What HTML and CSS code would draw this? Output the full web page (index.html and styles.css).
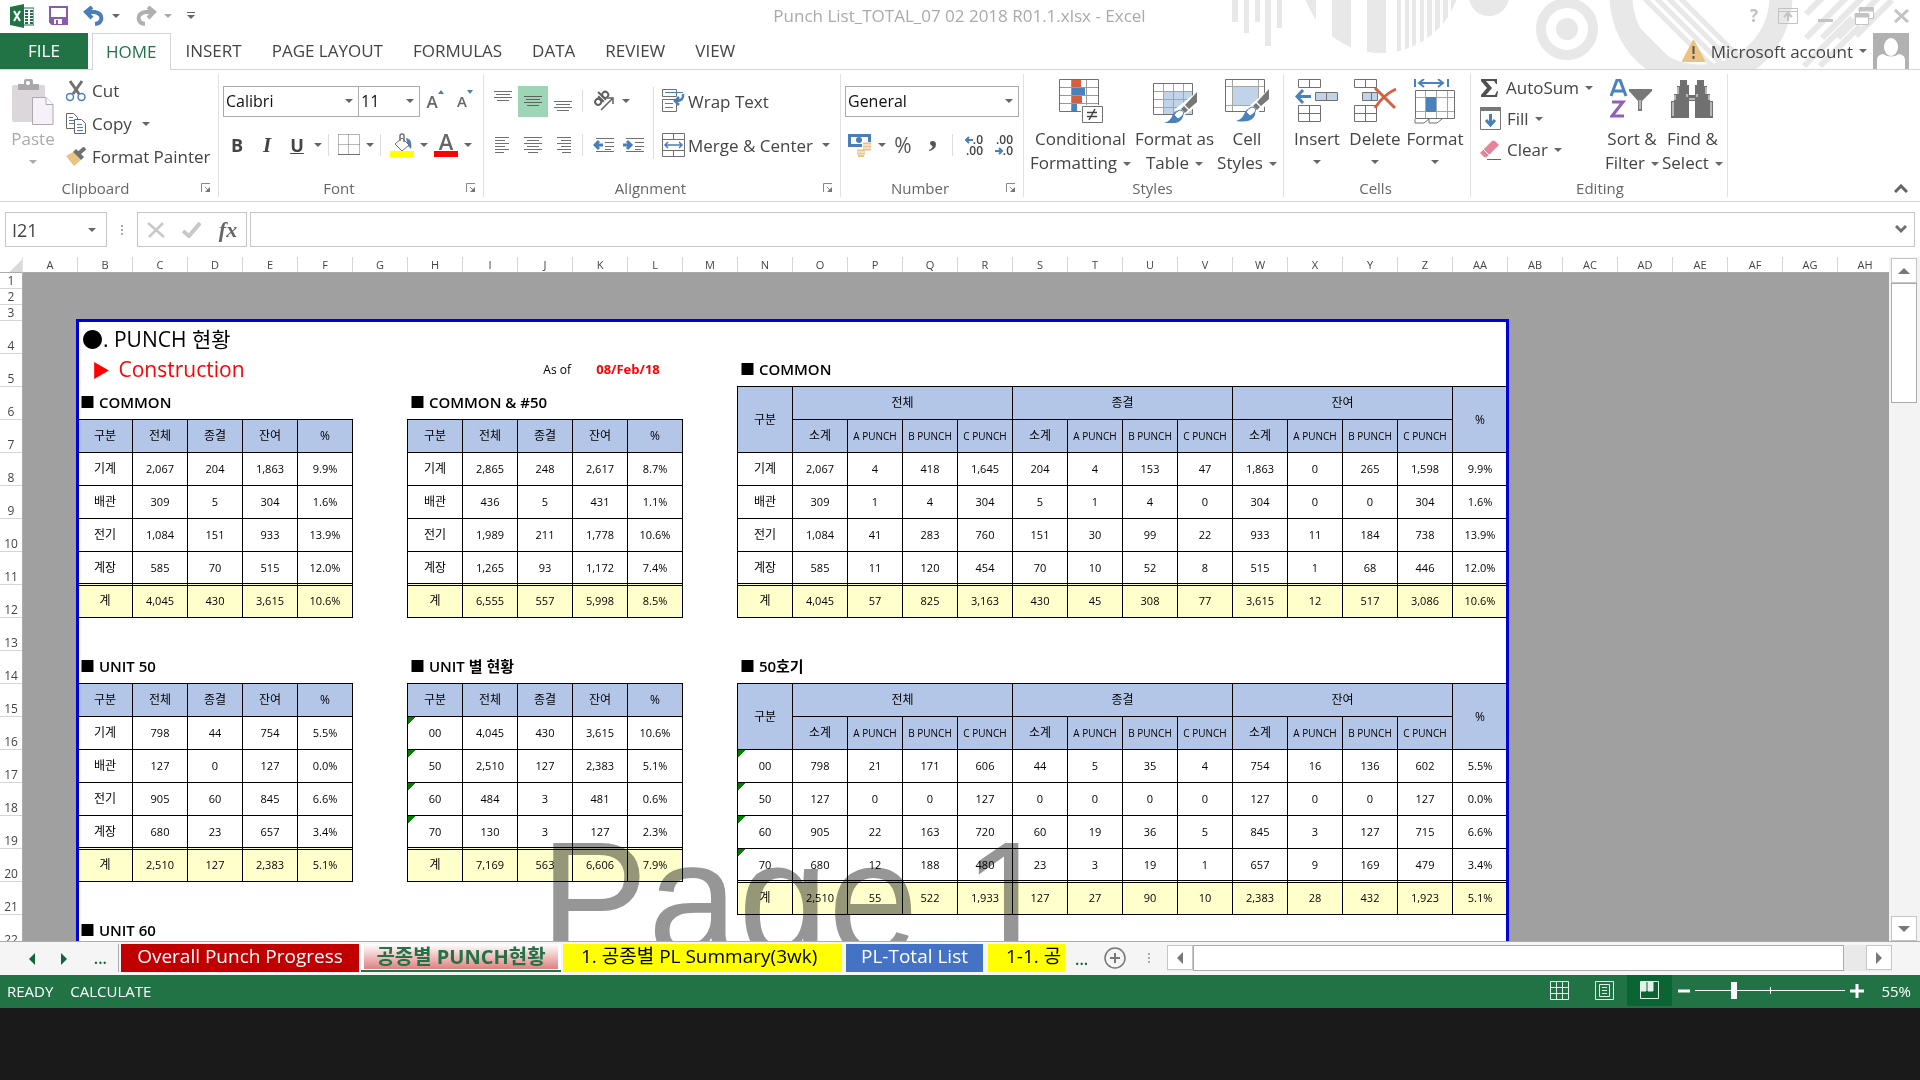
FILE: index.html
```html
<!DOCTYPE html>
<html lang="ko">
<head>
    <meta charset="UTF-8">
    <meta name="viewport" content="width=device-width, initial-scale=1.0">
    <title>Punch List_TOTAL_07 02 2018 R01.1.xlsx - Excel</title>
    <link rel="stylesheet" href="styles.css">
</head>
<body>
<div class="app">
    <header class="top">
        <svg class="decor" width="720" height="69" viewBox="0 0 720 69" fill="#e8e8e8" aria-hidden="true">
            <clipPath id="disc"><circle cx="181" cy="-27" r="80"/></clipPath>
            <clipPath id="ring"><circle cx="501" cy="-4" r="70"/></clipPath>
            <path d="M32 0h6v22h-6zM44 0h5v33h-5zM55 0h5v22h-5zM65 0h6v46h-6zM77 0h5v28h-5z"/>
            <path clip-path="url(#disc)" d="M96 0h20v60h-20zM132 0h19v60h-19zM167 0h19v60h-19zM197 0h4v60h-4zM205 0h4v60h-4zM212 0h4v60h-4zM220 0h4v60h-4zM227 0h5v60h-5zM235 0h5v60h-5zM243 0h5v60h-5zM251 0h5v60h-5z"/>
            <circle cx="289" cy="-4" r="20"/>
            <circle cx="367" cy="29" r="26" fill="none" stroke="#e8e8e8" stroke-width="10"/>
            <circle cx="367" cy="29" r="11"/>
            <circle cx="501" cy="-4" r="80" fill="none" stroke="#e8e8e8" stroke-width="23"/>
            <path clip-path="url(#ring)" d="M430 18l50 50h-30l-20-10z"/>
            <path clip-path="url(#ring)" stroke="#e8e8e8" stroke-width="5" d="M430 -16l84 84M442 -16l84 84M454 -16l84 84M466 -16l84 84"/>
            <path stroke="#e8e8e8" stroke-width="6" d="M606 38l45-45M622 38l45-45M638 38l45-45M606 14l20-20M656 36l36-36M604 66l48-48M620 66l40-40"/>
        </svg>
        <div class="titlebar">
            <div class="quick">
                <button aria-label="Excel"><svg width="24" height="24" viewBox="0 0 24 24"><path d="M13 4h11v17H13z" fill="#fff" stroke="#217346"/><path d="M15 7h3M20 7h3M15 10h3M20 10h3M15 13h3M20 13h3M15 16h3M20 16h3M15 19h3M20 19h3" stroke="#217346" stroke-width="2"/><path d="M0 3l14-3v24L0 21z" fill="#217346"/><path d="M4 7l6 10M10 7L4 17" stroke="#fff" stroke-width="2"/></svg></button>
                <button aria-label="Save"><svg width="19" height="19" viewBox="0 0 19 19"><path d="M1 1h17v17H3l-2-2z" fill="#fff" stroke="#8a5ab0" stroke-width="2"/><path d="M1 11h17v7H3l-2-2z" fill="#8a5ab0"/><path d="M5 13h8v5H5z" fill="#fff"/><path d="M7 14h2v4H7z" fill="#8a5ab0"/></svg></button>
                <button aria-label="Undo"><svg width="22" height="20" viewBox="0 0 22 20" fill="none" stroke="#4a7ebb" stroke-width="4"><path d="M2 6h10c9 2 8 11 0 12"/><path d="M9 1L3 6l6 6"/></svg><i class="caret"></i></button>
                <button aria-label="Redo" class="muted"><svg width="22" height="20" viewBox="0 0 22 20" fill="none" stroke="#b0b0b0" stroke-width="4"><path d="M20 6H10c-9 2-8 11 0 12"/><path d="M13 1l6 5-6 6"/></svg><i class="caret"></i></button>
                <button aria-label="Customize Quick Access Toolbar" class="customize"><i class="caret"></i></button>
            </div>
            <h1>Punch List_TOTAL_07 02 2018 R01.1.xlsx - Excel</h1>
            <div class="window-buttons">
                <button aria-label="Help">?</button>
                <button aria-label="Ribbon display options"><svg width="20" height="16" viewBox="0 0 20 16" fill="none" stroke="#c3c3c3"><path d="M.5.5h19v15H.5zM1 3.500h18"/><path d="M10 13V6M6 9l4-4 4 4" stroke-width="2"/></svg></button>
                <button aria-label="Minimize"><svg width="16" height="16" viewBox="0 0 16 16"><path d="M0 11h15v3H0z" fill="#c3c3c3"/></svg></button>
                <button aria-label="Restore"><svg width="20" height="20" viewBox="0 0 20 20" fill="#fff" stroke="#c3c3c3"><path d="M5.500 1.500h14v11h-14z"/><path d="M5 2h15v3H5z" fill="#c3c3c3"/><path d="M1.500 7.500h13v11h-13z"/><path d="M1 8h14v3H1z" fill="#c3c3c3"/></svg></button>
                <button aria-label="Close"><svg width="15" height="14" viewBox="0 0 15 14" stroke="#c3c3c3" stroke-width="3"><path d="M1 1l13 12M14 1L1 13"/></svg></button>
            </div>
        </div>
        <nav class="tabs">
            <a href="#" class="file">FILE</a>
            <a href="#" class="active">HOME</a>
            <a href="#">INSERT</a>
            <a href="#">PAGE LAYOUT</a>
            <a href="#">FORMULAS</a>
            <a href="#">DATA</a>
            <a href="#">REVIEW</a>
            <a href="#">VIEW</a>
            <button class="account">
                <svg width="23" height="22" viewBox="0 0 23 22"><path d="M11.500 1L22 21H1z" fill="#eac282" stroke="#eac282" stroke-width="2" stroke-linejoin="round"/><path d="M11.500 6v8M11.500 16v3" stroke="#555" stroke-width="2"/></svg>
                <span>Microsoft account</span><i class="caret"></i>
                <svg class="avatar" width="36" height="36" viewBox="0 0 36 36"><path fill="#b1b1b1" d="M0 0h36v36H0z"/><ellipse cx="18" cy="14" rx="7" ry="9" fill="#fff"/><path d="M4 36V27q0-5 6-6 8 5 16 0 6 1 6 6v9z" fill="#fff"/></svg>
            </button>
        </nav>
    </header>

    <section class="ribbon">
        <div class="group clipboard">
            <div class="tools">
                <button class="big paste" aria-label="Paste">
                    <svg width="42" height="48" viewBox="0 0 42 48"><rect y="6" width="33" height="37" rx="2" fill="#dbd7db"/><path d="M6 11V5h6V2q0-2 2-2h5q2 0 2 2v3h6v6z" fill="#aaa8aa"/><circle cx="16" cy="4" r="2" fill="#fff"/><path d="M20.500 18.500H34l7 7v20H20.500z" fill="#f6f1f8" stroke="#aaa"/><path d="M34 18.500v7h7" fill="#fff" stroke="#aaa"/></svg>
                    <span>Paste</span><i class="caret"></i>
                </button>
                <div class="stack">
                    <button><svg width="20" height="22" viewBox="0 0 20 22" fill="none"><path d="M4 1l9 13M16 1L7 14" stroke="#707070" stroke-width="3"/><circle cx="4" cy="17" r="3.500" stroke="#4a7ebb" stroke-width="1.500"/><circle cx="15.500" cy="17" r="3.500" stroke="#4a7ebb" stroke-width="1.500"/></svg>Cut</button>
                    <button><svg width="20" height="21" viewBox="0 0 20 21" fill="#fff" stroke="#666"><path d="M.5.5h7l4 4v11H.5z"/><path d="M3 4.500h4M3 7.500h5M3 10.500h5" stroke="#4a7ebb"/><path d="M8.500 6.500h7l4 4v10h-11z"/><path d="M11 11.500h5M11 14.500h6M11 17.500h6" stroke="#4a7ebb"/></svg>Copy<i class="caret"></i></button>
                    <button><svg width="20" height="19" viewBox="0 0 20 19"><path d="M0 9l7-4 8 8-7 6z" fill="#eac282"/><path d="M7 5l3-3 8 8-3 3z" fill="#707070"/><path d="M12 7l7-6" stroke="#707070" stroke-width="4"/></svg>Format Painter</button>
                </div>
            </div>
            <div class="caption"><span>Clipboard</span><button class="launcher" aria-label="Clipboard settings"><svg width="10" height="10" viewBox="0 0 10 10"><path d="M.5 9V.5H9M4 4l4 4" stroke="#888" fill="none"/><path d="M9 4v5H4z" fill="#777"/></svg></button></div>
        </div>

        <div class="group font">
            <div class="rows">
                <div class="line">
                    <label class="pick font-name"><select aria-label="Font"><option>Calibri</option></select></label>
                    <label class="pick font-size"><select aria-label="Font size"><option>11</option></select></label>
                    <button class="tool grow" aria-label="Increase font size">A<i class="up"></i></button>
                    <button class="tool shrink" aria-label="Decrease font size">A<i class="down"></i></button>
                </div>
                <div class="line">
                    <button class="tool bold" aria-label="Bold">B</button>
                    <button class="tool italic" aria-label="Italic">I</button>
                    <button class="tool underline" aria-label="Underline">U</button>
                    <button class="drop" aria-label="Underline options"><i class="caret"></i></button>
                    <hr>
                    <button class="tool" aria-label="Borders"><svg width="22" height="22" viewBox="0 0 22 22" fill="none" stroke="#707070"><path d="M.5.5h21v20M.5.5v20M10.500.5v20M.5 10.500h21" stroke-dasharray="1 1"/><path d="M0 20.500h22"/></svg></button>
                    <button class="drop" aria-label="Border options"><i class="caret"></i></button>
                    <hr>
                    <button class="tool wide" aria-label="Fill color"><svg width="24" height="24" viewBox="0 0 24 24" fill="none"><path d="M16 5c5 1 6 5 5 11l-3-3z" fill="#4a7ebb"/><path d="M12 5l7 7-7 6-7-7z" fill="#fff" stroke="#707070"/><path d="M10 8V3q0-2 2-2t2 2v6" stroke="#707070" stroke-width="1.500"/><path d="M0 18h24v6H0z" fill="#ff0"/></svg></button>
                    <button class="drop" aria-label="Fill color options"><i class="caret"></i></button>
                    <button class="tool wide color" aria-label="Font color">A</button>
                    <button class="drop" aria-label="Font color options"><i class="caret"></i></button>
                </div>
            </div>
            <div class="caption"><span>Font</span><button class="launcher" aria-label="Font settings"><svg width="10" height="10" viewBox="0 0 10 10"><path d="M.5 9V.5H9M4 4l4 4" stroke="#888" fill="none"/><path d="M9 4v5H4z" fill="#777"/></svg></button></div>
        </div>

        <div class="group alignment">
            <div class="tools">
                <div class="rows">
                    <div class="line">
                        <button class="tool" aria-label="Top align"><svg width="18" height="22" viewBox="0 0 18 22" stroke="#707070"><path d="M0 1.500h18M2 4.500h14M0 7.500h18M3 10.500h12"/></svg></button>
                        <button class="tool on" aria-label="Middle align"><svg width="18" height="22" viewBox="0 0 18 22" stroke="#606060"><path d="M0 6.500h18M2 9.500h14M0 12.500h18M3 15.500h12"/></svg></button>
                        <button class="tool" aria-label="Bottom align"><svg width="18" height="22" viewBox="0 0 18 22" stroke="#707070"><path d="M0 11.500h18M2 14.500h14M0 17.500h18M3 20.500h12"/></svg></button>
                        <hr>
                        <button class="tool wide" aria-label="Orientation"><svg class="orient" width="22" height="22" viewBox="0 0 22 22" fill="none" stroke="#606060" stroke-width="2"><g transform="rotate(-45 8 9)"><circle cx="4" cy="9" r="3"/><path d="M8 5v8M11 2v11"/><circle cx="14" cy="9" r="3"/></g><path d="M8 20L19 9M14 8h6v6" stroke-width="1.500"/></svg></button>
                        <button class="drop" aria-label="Orientation options"><i class="caret"></i></button>
                    </div>
                    <div class="line">
                        <button class="tool" aria-label="Align left"><svg width="16" height="18" viewBox="0 0 16 18" stroke="#707070"><path d="M0 1.500h14M0 4.500h10M0 7.500h14M0 10.500h10M0 13.500h14M0 16.500h9"/></svg></button>
                        <button class="tool" aria-label="Center"><svg width="18" height="18" viewBox="0 0 18 18" stroke="#707070"><path d="M0 1.500h18M3 4.500h12M0 7.500h18M3 10.500h12M0 13.500h18M4 16.500h10"/></svg></button>
                        <button class="tool" aria-label="Align right"><svg width="16" height="18" viewBox="0 0 16 18" stroke="#707070"><path d="M2 1.500h14M6 4.500h10M2 7.500h14M6 10.500h10M2 13.500h14M7 16.500h9"/></svg></button>
                        <hr>
                        <button class="tool" aria-label="Decrease indent"><svg width="21" height="16" viewBox="0 0 21 16" stroke="#707070"><path d="M3 1.500h18M12 5.500h9M12 9.500h9M3 14.500h18M12 12.500h6"/><path d="M10 8H2M6 4L2 8l4 4" fill="none" stroke="#4a7ebb" stroke-width="3"/></svg></button>
                        <button class="tool" aria-label="Increase indent"><svg width="21" height="16" viewBox="0 0 21 16" stroke="#707070"><path d="M3 1.500h18M12 5.500h9M12 9.500h9M3 14.500h18M12 12.500h6"/><path d="M0 8h8M4 4l4 4-4 4" fill="none" stroke="#4a7ebb" stroke-width="3"/></svg></button>
                    </div>
                </div>
                <div class="rows wrap">
                    <div class="line">
                        <button class="text"><svg width="23" height="24" viewBox="0 0 23 24" fill="none" stroke="#707070"><path d="M.5.5h14v7H.5zM.5 10.500h14v12H.5z"/><path d="M3 3.500h18M3 14.500h8M3 18.500h8" stroke="#4a7ebb"/><path d="M21 5q1 7-7 7M17 8l-4 4 4 4" stroke="#4a7ebb" stroke-width="2.500"/></svg>Wrap Text</button>
                    </div>
                    <div class="line">
                        <button class="text"><svg width="23" height="24" viewBox="0 0 23 24" fill="none" stroke="#707070"><path d="M.5.5h22v23H.5zM0 6.500h23M0 17.500h23M11.500 0v6M11.500 18v6"/><path d="M3 12h17M6 9l-3 3 3 3M17 9l3 3-3 3" stroke="#4a7ebb" stroke-width="1.500"/></svg>Merge &amp; Center<i class="caret"></i></button>
                    </div>
                </div>
            </div>
            <div class="caption"><span>Alignment</span><button class="launcher" aria-label="Alignment settings"><svg width="10" height="10" viewBox="0 0 10 10"><path d="M.5 9V.5H9M4 4l4 4" stroke="#888" fill="none"/><path d="M9 4v5H4z" fill="#777"/></svg></button></div>
        </div>

        <div class="group number">
            <div class="rows">
                <div class="line">
                    <label class="pick number-format"><select aria-label="Number format"><option>General</option></select></label>
                </div>
                <div class="line">
                    <button class="tool wide" aria-label="Accounting format"><svg width="24" height="23" viewBox="0 0 24 23"><path d="M0 0h23v13H0z" fill="#4a7ebb"/><path d="M3 3h17v7H3z" fill="#fff"/><circle cx="11" cy="6" r="3" fill="#4a7ebb"/><path d="M14 8h10v10H14zM8 14h10v9H8z" fill="#fff"/><path d="M15 9.500h8M15 12.500h8M15 15.500h8M9 16.500h8M9 19.500h8M10 22h6" stroke="#eac282" stroke-width="2"/></svg></button>
                    <button class="drop" aria-label="Accounting options"><i class="caret"></i></button>
                    <button class="tool percent" aria-label="Percent style">%</button>
                    <button class="tool comma" aria-label="Comma style">,</button>
                    <hr>
                    <button class="tool decimal" aria-label="Increase decimal"><span><svg width="8" height="8" viewBox="0 0 8 8" fill="none" stroke="#4a7ebb" stroke-width="2"><path d="M8 4H1M4 1L1 4l3 3"/></svg>.0</span><span>.00</span></button>
                    <button class="tool decimal" aria-label="Decrease decimal"><span>.00</span><span><svg width="8" height="8" viewBox="0 0 8 8" fill="none" stroke="#4a7ebb" stroke-width="2"><path d="M0 4h7M4 1l3 3-3 3"/></svg>.0</span></button>
                </div>
            </div>
            <div class="caption"><span>Number</span><button class="launcher" aria-label="Number settings"><svg width="10" height="10" viewBox="0 0 10 10"><path d="M.5 9V.5H9M4 4l4 4" stroke="#888" fill="none"/><path d="M9 4v5H4z" fill="#777"/></svg></button></div>
        </div>

        <div class="group styles">
            <div class="tools">
                <button class="big cond">
                    <svg width="44" height="44" viewBox="0 0 44 44" fill="none"><path d="M13 1h9v8h-9z" fill="#d65f40"/><path d="M13 9h13v8H13z" fill="#4a82bb"/><path d="M13 17h10v8H13z" fill="#d65f40"/><path d="M13 25h5v8h-5z" fill="#4a82bb"/><path d="M.5.500h39v32H.5z" stroke="#707070"/><path d="M12.500 1v31M27.500 1v31M1 8.500h38M1 16.500h38M1 24.500h38" stroke="#999"/><path d="M22 26h22v18H22z" fill="#fff"/><path d="M23.500 27.500h20v16h-20z" fill="#fff" stroke="#707070"/><path d="M28 33.500h10M28 37.500h10M36 30l-6 11" stroke="#444" stroke-width="1.500"/></svg>
                    <span>Conditional<br>Formatting<i class="caret"></i></span>
                </button>
                <button class="big as-table">
                    <svg width="44" height="44" viewBox="0 0 44 44" fill="none"><path d="M11 12h29v23H11z" fill="#c0d3e9"/><path d="M.5 4.500h39v31H.5z" stroke="#707070"/><path d="M10.500 5v30M20.500 5v30M30.500 5v30M1 12.500h38M1 20.500h38M1 28.500h38" stroke="#a5a5a5"/><path d="M45 12v14L29 38l-8-7z" fill="#fff"/><path d="M44 13v10l-8 7-4-4z" fill="#777"/><path d="M31 27l4 4-3 3-4-4z" fill="#777"/><path d="M11 46q7-2 9-9 3-5 8-3 4 3 1 8-4 6-18 4z" transform="translate(0 -2)" fill="#4a82bb"/><path d="M21 36q2-4 6-5 5 1 3 5-3 3-5 4z" fill="#fff" stroke="#4a82bb"/></svg>
                    <span>Format as<br>Table<i class="caret"></i></span>
                </button>
                <button class="big cell-styles">
                    <svg width="44" height="44" viewBox="0 0 44 44" fill="none"><path d="M.5.500h39v32H.5z" stroke="#707070"/><path d="M8 8h25v18H8z" fill="#c0d3e9"/><path d="M7.500 1v31M33.500 1v31M1 7.500h38M1 26.500h38" stroke="#a5a5a5"/><path d="M45 9v14L29 37l-8-7z" fill="#fff"/><path d="M44 10v10l-8 7-4-4z" fill="#777"/><path d="M31 24l4 4-3 3-4-4z" fill="#777"/><path d="M11 42q7-2 9-9 3-5 8-3 4 3 1 8-4 6-18 4z" fill="#4a82bb"/><path d="M21 33q2-4 6-5 5 1 3 5-3 3-5 4z" fill="#fff" stroke="#4a82bb"/></svg>
                    <span>Cell<br>Styles<i class="caret"></i></span>
                </button>
            </div>
            <div class="caption"><span>Styles</span></div>
        </div>

        <div class="group cells-group">
            <div class="tools">
                <button class="big insert">
                    <svg width="44" height="44" viewBox="0 0 44 44" fill="none" stroke="#707070"><path d="M3.500.500h22v8h-22zM14.500.500v8M3.500 26.500h22v16h-22zM14.500 26.500v16M3.500 34.500h22"/><path d="M20.500 13.500h22v8h-22zM31.500 13.500v8" fill="#c0d3e9"/><path d="M16 17.500H2M8 11l-6 6.500L8 24" stroke="#4a82bb" stroke-width="3"/></svg>
                    <span>Insert</span><i class="caret"></i>
                </button>
                <button class="big delete">
                    <svg width="44" height="44" viewBox="0 0 44 44" fill="none" stroke="#707070"><path d="M1.500.500h22v8h-22zM12.500.500v8M1.500 26.500h22v16h-22zM12.500 26.500v16M1.500 34.500h22"/><path d="M9.500 13.500h15v8h-15zM18.500 13.500v8" fill="#c0d3e9"/><path d="M22 9q8 8 20 20M43 10Q30 16 22 29" stroke="#d65f40" stroke-width="3"/></svg>
                    <span>Delete</span><i class="caret"></i>
                </button>
                <button class="big format">
                    <svg width="42" height="46" viewBox="0 0 42 46" fill="none" stroke="#707070"><path d="M1 0v8M34 0v8M5 4h24M10 0L5 4l5 4M24 0l5 4-5 4" stroke="#4a82bb" stroke-width="2"/><path d="M1.500 11.500h39v28h-39z"/><path d="M11.500 12v27M22.500 12v27M33.500 12v27M2 18.500h38M2 32.500h38" stroke="#a5a5a5"/><path d="M12 18h10v15H12z" fill="#4a82bb" stroke="none"/><path d="M1 40v4h9l5-4v4h8l5-4"/></svg>
                    <span>Format</span><i class="caret"></i>
                </button>
            </div>
            <div class="caption"><span>Cells</span></div>
        </div>

        <div class="group editing">
            <div class="tools">
                <div class="stack">
                    <button><svg width="20" height="20" viewBox="0 0 20 20"><path d="M1 1h16v5h-1l-2-3H6l6 7-6 7h9l2-4h1l-1 6H1v-2l6-7-6-7z" fill="#505050"/></svg>AutoSum<i class="caret"></i></button>
                    <button><svg width="21" height="23" viewBox="0 0 21 23"><path d="M.5.500h20v22H.5z" fill="#fff" stroke="#777"/><path d="M0 0h21v4H0z" fill="#777"/><path d="M10.500 7v11M6 13l4.500 5 4.500-5" fill="none" stroke="#4a7ebb" stroke-width="3"/></svg>Fill<i class="caret"></i></button>
                    <button><svg width="21" height="20" viewBox="0 0 21 20"><path d="M0 13L12 1q1-1 3 0l4 4-11 11q-2 2-4 1z" fill="#e6849a"/><path d="M3 9l6 6" stroke="#fff"/><path d="M7 19.500h14" stroke="#666"/></svg>Clear<i class="caret"></i></button>
                </div>
                <button class="big sort">
                    <svg width="44" height="44" viewBox="0 0 44 44"><path d="M1 17L7 1h3l6 16M4 12h9" fill="none" stroke="#4a82bb" stroke-width="3"/><path d="M2 23h11L2 37h12" fill="none" stroke="#9060b8" stroke-width="3"/><path d="M19 10h23v2L32 22v10h-4V22L19 12z" fill="#777"/><path d="M30 21v9" stroke="#fff"/></svg>
                    <span>Sort &amp;<br>Filter<i class="caret"></i></span>
                </button>
                <button class="big find">
                    <svg width="42" height="44" viewBox="0 0 42 44"><path d="M9 1h7v5h2v10h6V6h2V1h7v6h3v8h3v7h3v17H24V22h-6v17H0V22h3v-7h3V7h3z" fill="#707070"/><path d="M7 8v7M4 16v5M2 23v14M35 8v7M38 16v5M40 23v14M16 15v3M26 15v3M18 20h6" stroke="#fff"/></svg>
                    <span>Find &amp;<br>Select<i class="caret"></i></span>
                </button>
            </div>
            <div class="caption"><span>Editing</span></div>
        </div>
        <button class="collapse" aria-label="Collapse the ribbon"><svg width="14" height="9" viewBox="0 0 14 9"><path d="M1 8l6-6 6 6" fill="none" stroke="#666" stroke-width="3"/></svg></button>
    </section>

    <section class="formula-bar">
        <label class="pick name-box"><input type="text" value="I21" aria-label="Name box"></label>
        <span class="grip"></span>
        <div class="formula-buttons">
            <button aria-label="Cancel"><svg width="18" height="16" viewBox="0 0 18 16"><path d="M1 1l16 14M16 1L2 15" stroke="#c8c8c8" stroke-width="2.500"/></svg></button>
            <button aria-label="Enter"><svg width="19" height="16" viewBox="0 0 19 16"><path d="M1 9l6 5L18 1" fill="none" stroke="#c8c8c8" stroke-width="4"/></svg></button>
            <button aria-label="Insert function" class="fx">fx</button>
        </div>
        <div class="formula">
            <input type="text" aria-label="Formula">
            <button aria-label="Expand formula bar"><svg width="12" height="9" viewBox="0 0 12 9"><path d="M1 1l5 5 5-5" fill="none" stroke="#707070" stroke-width="3"/></svg></button>
        </div>
    </section>

    <main class="workspace">
        <div class="sheet">
            <div class="corner"></div>
            <div class="col-heads">
                <span>A</span><span>B</span><span>C</span><span>D</span><span>E</span><span>F</span><span>G</span><span>H</span><span>I</span><span>J</span><span>K</span><span>L</span><span>M</span><span>N</span><span>O</span><span>P</span><span>Q</span><span>R</span><span>S</span><span>T</span><span>U</span><span>V</span><span>W</span><span>X</span><span>Y</span><span>Z</span><span>AA</span><span>AB</span><span>AC</span><span>AD</span><span>AE</span><span>AF</span><span>AG</span><span>AH</span>
            </div>
            <div class="row-heads">
                <span>1</span><span>2</span><span>3</span><span>4</span><span>5</span><span>6</span><span>7</span><span>8</span><span>9</span><span>10</span><span>11</span><span>12</span><span>13</span><span>14</span><span>15</span><span>16</span><span>17</span><span>18</span><span>19</span><span>20</span><span>21</span><span>22</span>
            </div>
            <div class="cells">
                <div class="paper"></div>
                <h2 class="doc-title">●. PUNCH 현황</h2>
                <p class="doc-sub"><span>▶</span> Construction</p>
                <p class="as-of">As of</p>
                <p class="date">08/Feb/18</p>

                <h3 class="at-b6">■ COMMON</h3>
                <table class="small at-b7">
                    <thead><tr><th>구분</th><th>전체</th><th>종결</th><th>잔여</th><th>%</th></tr></thead>
                    <tbody>
                        <tr><td>기계</td><td>2,067</td><td>204</td><td>1,863</td><td>9.9%</td></tr>
                        <tr><td>배관</td><td>309</td><td>5</td><td>304</td><td>1.6%</td></tr>
                        <tr><td>전기</td><td>1,084</td><td>151</td><td>933</td><td>13.9%</td></tr>
                        <tr><td>계장</td><td>585</td><td>70</td><td>515</td><td>12.0%</td></tr>
                    </tbody>
                    <tfoot><tr><td>계</td><td>4,045</td><td>430</td><td>3,615</td><td>10.6%</td></tr></tfoot>
                </table>

                <h3 class="at-h6">■ COMMON &amp; #50</h3>
                <table class="small at-h7">
                    <thead><tr><th>구분</th><th>전체</th><th>종결</th><th>잔여</th><th>%</th></tr></thead>
                    <tbody>
                        <tr><td>기계</td><td>2,865</td><td>248</td><td>2,617</td><td>8.7%</td></tr>
                        <tr><td>배관</td><td>436</td><td>5</td><td>431</td><td>1.1%</td></tr>
                        <tr><td>전기</td><td>1,989</td><td>211</td><td>1,778</td><td>10.6%</td></tr>
                        <tr><td>계장</td><td>1,265</td><td>93</td><td>1,172</td><td>7.4%</td></tr>
                    </tbody>
                    <tfoot><tr><td>계</td><td>6,555</td><td>557</td><td>5,998</td><td>8.5%</td></tr></tfoot>
                </table>

                <h3 class="at-n5">■ COMMON</h3>
                <table class="large at-n6">
                    <thead>
                        <tr><th rowspan="2">구분</th><th colspan="4">전체</th><th colspan="4">종결</th><th colspan="4">잔여</th><th rowspan="2">%</th></tr>
                        <tr><th>소계</th><th class="punch">A PUNCH</th><th class="punch">B PUNCH</th><th class="punch">C PUNCH</th><th>소계</th><th class="punch">A PUNCH</th><th class="punch">B PUNCH</th><th class="punch">C PUNCH</th><th>소계</th><th class="punch">A PUNCH</th><th class="punch">B PUNCH</th><th class="punch">C PUNCH</th></tr>
                    </thead>
                    <tbody>
                        <tr><td>기계</td><td>2,067</td><td>4</td><td>418</td><td>1,645</td><td>204</td><td>4</td><td>153</td><td>47</td><td>1,863</td><td>0</td><td>265</td><td>1,598</td><td>9.9%</td></tr>
                        <tr><td>배관</td><td>309</td><td>1</td><td>4</td><td>304</td><td>5</td><td>1</td><td>4</td><td>0</td><td>304</td><td>0</td><td>0</td><td>304</td><td>1.6%</td></tr>
                        <tr><td>전기</td><td>1,084</td><td>41</td><td>283</td><td>760</td><td>151</td><td>30</td><td>99</td><td>22</td><td>933</td><td>11</td><td>184</td><td>738</td><td>13.9%</td></tr>
                        <tr><td>계장</td><td>585</td><td>11</td><td>120</td><td>454</td><td>70</td><td>10</td><td>52</td><td>8</td><td>515</td><td>1</td><td>68</td><td>446</td><td>12.0%</td></tr>
                    </tbody>
                    <tfoot><tr><td>계</td><td>4,045</td><td>57</td><td>825</td><td>3,163</td><td>430</td><td>45</td><td>308</td><td>77</td><td>3,615</td><td>12</td><td>517</td><td>3,086</td><td>10.6%</td></tr></tfoot>
                </table>

                <h3 class="at-b14">■ UNIT 50</h3>
                <table class="small at-b15">
                    <thead><tr><th>구분</th><th>전체</th><th>종결</th><th>잔여</th><th>%</th></tr></thead>
                    <tbody>
                        <tr><td>기계</td><td>798</td><td>44</td><td>754</td><td>5.5%</td></tr>
                        <tr><td>배관</td><td>127</td><td>0</td><td>127</td><td>0.0%</td></tr>
                        <tr><td>전기</td><td>905</td><td>60</td><td>845</td><td>6.6%</td></tr>
                        <tr><td>계장</td><td>680</td><td>23</td><td>657</td><td>3.4%</td></tr>
                    </tbody>
                    <tfoot><tr><td>계</td><td>2,510</td><td>127</td><td>2,383</td><td>5.1%</td></tr></tfoot>
                </table>

                <h3 class="at-h14">■ UNIT 별 현황</h3>
                <table class="small flagged at-h15">
                    <thead><tr><th>구분</th><th>전체</th><th>종결</th><th>잔여</th><th>%</th></tr></thead>
                    <tbody>
                        <tr><td>00</td><td>4,045</td><td>430</td><td>3,615</td><td>10.6%</td></tr>
                        <tr><td>50</td><td>2,510</td><td>127</td><td>2,383</td><td>5.1%</td></tr>
                        <tr><td>60</td><td>484</td><td>3</td><td>481</td><td>0.6%</td></tr>
                        <tr><td>70</td><td>130</td><td>3</td><td>127</td><td>2.3%</td></tr>
                    </tbody>
                    <tfoot><tr><td>계</td><td>7,169</td><td>563</td><td>6,606</td><td>7.9%</td></tr></tfoot>
                </table>

                <h3 class="at-n14">■ 50호기</h3>
                <table class="large flagged at-n15">
                    <thead>
                        <tr><th rowspan="2">구분</th><th colspan="4">전체</th><th colspan="4">종결</th><th colspan="4">잔여</th><th rowspan="2">%</th></tr>
                        <tr><th>소계</th><th class="punch">A PUNCH</th><th class="punch">B PUNCH</th><th class="punch">C PUNCH</th><th>소계</th><th class="punch">A PUNCH</th><th class="punch">B PUNCH</th><th class="punch">C PUNCH</th><th>소계</th><th class="punch">A PUNCH</th><th class="punch">B PUNCH</th><th class="punch">C PUNCH</th></tr>
                    </thead>
                    <tbody>
                        <tr><td>00</td><td>798</td><td>21</td><td>171</td><td>606</td><td>44</td><td>5</td><td>35</td><td>4</td><td>754</td><td>16</td><td>136</td><td>602</td><td>5.5%</td></tr>
                        <tr><td>50</td><td>127</td><td>0</td><td>0</td><td>127</td><td>0</td><td>0</td><td>0</td><td>0</td><td>127</td><td>0</td><td>0</td><td>127</td><td>0.0%</td></tr>
                        <tr><td>60</td><td>905</td><td>22</td><td>163</td><td>720</td><td>60</td><td>19</td><td>36</td><td>5</td><td>845</td><td>3</td><td>127</td><td>715</td><td>6.6%</td></tr>
                        <tr><td>70</td><td>680</td><td>12</td><td>188</td><td>480</td><td>23</td><td>3</td><td>19</td><td>1</td><td>657</td><td>9</td><td>169</td><td>479</td><td>3.4%</td></tr>
                    </tbody>
                    <tfoot><tr><td>계</td><td>2,510</td><td>55</td><td>522</td><td>1,933</td><td>127</td><td>27</td><td>90</td><td>10</td><td>2,383</td><td>28</td><td>432</td><td>1,923</td><td>5.1%</td></tr></tfoot>
                </table>

                <h3 class="at-b22">■ UNIT 60</h3>
                <div class="print-area"></div>
                <div class="watermark">Page 1</div>
            </div>
        </div>
        <div class="v-scroll">
            <button aria-label="Scroll up"><i class="up"></i></button>
            <div class="v-thumb"></div>
            <button aria-label="Scroll down"><i class="down"></i></button>
        </div>
    </main>

    <nav class="sheet-tabs">
        <div class="sheet-nav">
            <button aria-label="Previous sheet"><i class="left"></i></button>
            <button aria-label="Next sheet"><i class="right"></i></button>
            <button class="more">...</button>
        </div>
        <a href="#" class="red">Overall Punch Progress</a>
        <a href="#" class="current"><span>공종별 PUNCH현황</span></a>
        <a href="#" class="yellow">1. 공종별 PL Summary(3wk)</a>
        <a href="#" class="blue">PL-Total List</a>
        <a href="#" class="yellow cut">1-1. 공</a>
        <button class="more">...</button>
        <button class="new-sheet" aria-label="New sheet"><svg width="22" height="22" viewBox="0 0 22 22" fill="none" stroke="#777"><circle cx="11" cy="11" r="10" stroke-width="1.500"/><path d="M6 11h10M11 6v10" stroke-width="2"/></svg></button>
        <span class="grip"></span>
        <div class="h-scroll">
            <button aria-label="Scroll left"><i class="left"></i></button>
            <div class="h-thumb"></div>
            <button aria-label="Scroll right"><i class="right"></i></button>
        </div>
    </nav>

    <footer class="status">
        <span>READY</span><span>CALCULATE</span>
        <div class="views">
            <button aria-label="Normal"><svg width="19" height="19" viewBox="0 0 19 19" fill="none" stroke="#e6f0ea"><path d="M.5.500h18v18H.5zM6.500 0v19M12.500 0v19M0 6.500h19M0 12.500h19"/></svg></button>
            <button aria-label="Page layout"><svg width="19" height="19" viewBox="0 0 19 19" fill="none" stroke="#e6f0ea"><path d="M.5.500h18v18H.5zM4.500 3.500h10v12h-10zM7 6.500h5M7 9.500h5M7 12.500h5"/></svg></button>
            <button aria-label="Page break preview" class="on"><svg width="19" height="19" viewBox="0 0 19 19" fill="none" stroke="#e6f0ea"><path d="M.5.500h18v17H.5z"/><path d="M1 1h5v9H1zM8 1h5v9H8z" fill="#e6f0ea"/></svg></button>
        </div>
        <div class="zoom">
            <button aria-label="Zoom out"><svg width="12" height="14" viewBox="0 0 12 14"><path d="M0 7h12" stroke="#fff" stroke-width="3"/></svg></button>
            <input type="range" min="10" max="190" value="55" aria-label="Zoom">
            <button aria-label="Zoom in"><svg width="14" height="14" viewBox="0 0 14 14"><path d="M0 7h14M7 0v14" stroke="#fff" stroke-width="3"/></svg></button>
        </div>
        <button class="percent-label">55%</button>
    </footer>
</div>
</body>
</html>
```
FILE: styles.css
```css
:root {
    --green: #217346;
    --line: #d5d5d5;
    --ink: #444;
    --head-blue: #b4c6e7;
    --total: #ffffcc;
}

* {
    box-sizing: border-box;
}

body {
    margin: 0;
    background: #1a1a1a;
    font-family: "Open Sans", "Noto Sans CJK KR", sans-serif;
    font-size: 17px;
    color: var(--ink);
}

h1, h2, h3, p {
    margin: 0;
    font-weight: 400;
}

a {
    color: inherit;
    text-decoration: none;
}

button, input, select {
    font: inherit;
    color: inherit;
    background: none;
    border: 0;
    padding: 0;
    margin: 0;
    border-radius: 0;
}

svg {
    display: block;
    flex: none;
}

.app {
    display: flex;
    flex-direction: column;
    height: 100vh;
    padding-bottom: 72px;
}

/* triangles */
.caret, .up, .down, .left, .right {
    display: inline-block;
    flex: none;
    width: 0;
    height: 0;
    border: 4px solid transparent;
}

.caret {
    border-top-color: #666;
    border-bottom: 0;
}

.up {
    border-bottom-color: #4a7ebb;
    border-top: 0;
}

.down {
    border-top-color: #4a7ebb;
    border-bottom: 0;
}

.left {
    border-width: 6px;
    border-right-color: #0e6839;
    border-left: 0;
}

.right {
    border-width: 6px;
    border-left-color: #0e6839;
    border-right: 0;
}

/* title bar and tabs */
.top {
    position: relative;
    background: #fff;
}

.decor {
    position: absolute;
    top: 0;
    right: 0;
}

.titlebar {
    position: relative;
    display: grid;
    grid-template-columns: 1fr auto 1fr;
    align-items: center;
    height: 33px;
    padding: 0 11px 2px 10px;
}

.titlebar h1 {
    font-size: 17px;
    color: #aaa;
}

.quick, .window-buttons {
    display: flex;
    align-items: center;
}

.quick {
    gap: 15px;
}

.quick button {
    display: flex;
    align-items: center;
    gap: 7px;
}

.quick .muted .caret {
    border-top-color: #aaa;
}

.quick .customize {
    padding-top: 2px;
    border-top: 1px solid #666;
}

.window-buttons {
    justify-content: flex-end;
    gap: 20px;
    color: #c3c3c3;
    font-weight: 700;
}

.tabs {
    position: relative;
    display: flex;
    height: 37px;
    border-bottom: 1px solid var(--line);
}

.tabs a {
    padding: 0 15px;
    line-height: 36px;
}

.tabs .file {
    width: 88px;
    margin-right: 4px;
    text-align: center;
    color: #fff;
    background: var(--green);
}

.tabs .active {
    height: 37px;
    padding: 0 13px;
    color: var(--green);
    background: #fff;
    border: 1px solid var(--line);
    border-bottom: 0;
}

.account {
    display: flex;
    align-items: center;
    gap: 6px;
    margin-left: auto;
    padding-right: 11px;
}

/* ribbon */
.ribbon {
    display: flex;
    height: 132px;
    padding: 4px 0;
    background: #fff;
    border-bottom: 1px solid var(--line);
}

.group {
    display: flex;
    flex-direction: column;
    justify-content: space-between;
    border-right: 1px solid #e1e1e1;
}

.clipboard { width: 219px; }
.font { width: 265px; padding-left: 3px; }
.alignment { width: 357px; padding-left: 4px; }
.number { width: 183px; padding-left: 3px; }
.styles { width: 260px; padding-left: 5px; }
.cells-group { width: 187px; padding-left: 4px; }
.editing { width: 257px; padding-left: 9px; }

.tools {
    display: flex;
}

.caption {
    display: flex;
    align-items: center;
    height: 18px;
    padding-right: 7px;
    font-size: 15px;
    color: #666;
}

.caption span {
    flex: 1;
    text-align: center;
}

.caption span:not(:last-child) {
    padding-right: 10px;
}

.rows {
    padding-top: 5px;
}

.line {
    display: flex;
    align-items: center;
    height: 44px;
}

.line hr {
    width: 1px;
    height: 22px;
    margin: 0 5px 0 4px;
    border: 0;
    background: #ddd;
}

.tool {
    display: flex;
    align-items: center;
    justify-content: center;
    width: 30px;
    height: 31px;
}

.tool.wide {
    width: 32px;
}

.tool.on {
    background: #9fd5b7;
}

.drop {
    display: flex;
    justify-content: center;
    width: 12px;
}

.pick {
    position: relative;
    display: block;
    height: 31px;
    border: 1px solid #ababab;
}

.pick select, .pick input {
    appearance: none;
    width: 100%;
    height: 100%;
    padding-left: 2px;
    font-size: 16px;
    color: #111;
}

.pick::after {
    content: "";
    position: absolute;
    top: 12px;
    right: 5px;
    border: 4px solid transparent;
    border-top-color: #666;
    border-bottom: 0;
}

.font-name { width: 136px; margin-left: 1px; }
.font-size { width: 62px; margin-left: -1px; }
.number-format { width: 174px; margin-left: 1px; }

.grow, .shrink {
    align-items: center;
    font-size: 17px;
    font-weight: 600;
    color: #666;
}

.shrink {
    font-size: 15px;
}

.grow .up, .shrink .down {
    align-self: flex-start;
    margin-top: 4px;
    border-left-width: 3px;
    border-right-width: 3px;
}

.bold, .italic, .underline {
    font-size: 18px;
    font-weight: 700;
}

.italic {
    font-family: "Liberation Serif", serif;
    font-size: 21px;
    font-style: italic;
}

.underline {
    text-decoration: underline;
}

.color {
    font-size: 22px;
    font-weight: 600;
    line-height: 18px;
    color: #666;
    background: linear-gradient(#f00, #f00) 4px 21px / 24px 6px no-repeat;
    align-items: flex-start;
    padding-top: 2px;
}

.rows.wrap {
    margin-left: 5px;
    padding-left: 9px;
    background: linear-gradient(#ddd, #ddd) 0 13px / 1px 72px no-repeat;
}

.text {
    display: flex;
    align-items: center;
    gap: 3px;
}

.text .caret {
    margin-left: 6px;
}

.percent {
    font-size: 21px;
    color: #555;
}

.comma {
    font: 700 34px/12px "Liberation Serif", serif;
    color: #555;
    padding-bottom: 20px;
}

.decimal {
    flex-direction: column;
    align-items: flex-end;
    padding-right: 5px;
    font-size: 12px;
    font-weight: 600;
    line-height: 11px;
}

.decimal span {
    display: flex;
    align-items: center;
}

.stack {
    display: flex;
    flex-direction: column;
}

.stack button {
    display: flex;
    align-items: center;
    gap: 6px;
    height: 33px;
    white-space: nowrap;
}

.stack .caret {
    margin-left: 4px;
}

.editing .stack {
    width: 122px;
    margin-top: -2px;
}

.editing .stack button {
    height: 31px;
}

.editing .stack .caret {
    margin-left: 0;
}

.big {
    display: grid;
    grid-template-rows: 48px auto;
    align-content: start;
    justify-items: center;
    height: 104px;
    padding-top: 5px;
    line-height: 24px;
}

.big span {
    white-space: nowrap;
}

.big span .caret {
    margin-left: 6px;
    vertical-align: 3px;
}

.big > .caret {
    margin-top: 9px;
}

.paste {
    width: 66px;
    color: #aaa;
}

.paste .caret {
    border-top-color: #aaa;
}

.cond { width: 103px; }
.as-table { width: 85px; }
.cell-styles { width: 60px; }
.insert, .delete { width: 58px; }
.format { width: 62px; }
.sort, .find { width: 60px; }

.collapse {
    align-self: flex-end;
    margin: 0 12px 4px auto;
}

/* formula bar */
.formula-bar {
    display: flex;
    align-items: center;
    height: 55px;
    padding: 0 5px 0 5px;
    background: #fff;
}

.name-box {
    width: 102px;
    height: 35px;
    border-color: #c6c6c6;
}

.name-box input {
    padding-left: 6px;
    font-size: 18px;
    color: var(--ink);
}

.name-box::after {
    top: 15px;
    right: 10px;
}

.grip {
    width: 2px;
    height: 10px;
    background: repeating-linear-gradient(#aaa 0 2px, transparent 2px 4px);
}

.formula-bar .grip {
    margin: 0 14px;
}

.formula-buttons {
    display: flex;
    align-items: center;
    justify-content: space-around;
    width: 110px;
    height: 35px;
    border: 1px solid #c6c6c6;
}

.fx {
    font: italic 700 22px "Liberation Serif", serif;
    color: #666;
}

.formula {
    display: flex;
    flex: 1;
    height: 35px;
    margin-left: 3px;
    padding-right: 7px;
    border: 1px solid #c6c6c6;
}

.formula input {
    flex: 1;
}

/* worksheet */
.workspace {
    display: flex;
    flex: 1;
    min-height: 0;
    background: #f3f3f3;
}

.sheet {
    flex: 1;
    display: grid;
    grid-template-columns: 23px 1fr;
    grid-template-rows: 16px 1fr;
    min-width: 0;
    overflow: hidden;
    background: #fff;
}

.corner {
    border-right: 1px solid #e1e1e1;
    border-bottom: 1px solid #ababab;
    background: linear-gradient(135deg, #fff 66%, #dadada 66%);
}

.col-heads {
    display: flex;
    overflow: hidden;
    font-size: 11px;
    border-bottom: 1px solid #ababab;
}

.col-heads span {
    flex: 0 0 55px;
    line-height: 16px;
    text-align: center;
    border-right: 1px solid var(--line);
}

.row-heads {
    overflow: hidden;
    font-size: 12px;
    border-right: 1px solid #ababab;
}

.row-heads span {
    display: flex;
    align-items: flex-end;
    justify-content: center;
    height: 33px;
    line-height: 15px;
    border-bottom: 1px solid var(--line);
}

.row-heads span:nth-child(-n+3) {
    height: 16px;
}

.cells {
    position: relative;
    display: grid;
    grid-template-columns: repeat(34, 55px);
    grid-template-rows: repeat(3, 16px) repeat(19, 33px);
    align-items: center;
    overflow: hidden;
    background: #a0a0a0;
    color: #000;
}

.paper, .print-area {
    grid-area: 4 / 2 / 23 / 28;
    align-self: stretch;
    margin: -2px -1px 0 -2px;
}

.paper {
    background: #fff;
}

.print-area {
    z-index: 1;
    border: 3px solid #0000d8;
    border-bottom: 0;
}

.cells h2, .cells h3, .cells p {
    padding: 0 0 4px 2px;
    white-space: nowrap;
}

.cells .doc-title {
    grid-area: 4 / 2 / 5 / 8;
    padding: 0 0 0 4px;
    font-size: 21px;
}

.cells .doc-sub {
    grid-area: 5 / 2 / 6 / 8;
    padding-left: 14px;
    font-size: 21px;
    color: #f00;
}

.doc-sub span {
    margin-right: 3px;
    font-size: 18px;
}

.cells .as-of {
    grid-area: 5 / 10 / 6 / 11;
    justify-self: end;
    padding: 0 2px 2px 0;
    font-size: 12px;
}

.cells .date {
    grid-area: 5 / 11 / 6 / 13;
    justify-self: center;
    padding-left: 0;
    font-size: 13px;
    font-weight: 700;
    color: #f00;
}

.cells h3 {
    font-size: 15px;
    font-weight: 600;
}

.at-b6 { grid-area: 6 / 2 / 7 / 8; }
.at-h6 { grid-area: 6 / 8 / 7 / 14; }
.at-n5 { grid-area: 5 / 14 / 6 / 20; }
.at-b14 { grid-area: 14 / 2 / 15 / 8; }
.at-h14 { grid-area: 14 / 8 / 15 / 14; }
.at-n14 { grid-area: 14 / 14 / 15 / 20; }
.at-b22 { grid-area: 22 / 2 / 23 / 8; }
.at-b7 { grid-area: 7 / 2 / 13 / 7; }
.at-h7 { grid-area: 7 / 8 / 13 / 13; }
.at-n6 { grid-area: 6 / 14 / 13 / 28; }
.at-b15 { grid-area: 15 / 2 / 21 / 7; }
.at-h15 { grid-area: 15 / 8 / 21 / 13; }
.at-n15 { grid-area: 15 / 14 / 22 / 28; }

table {
    align-self: start;
    margin: -1px 0 0 -1px;
    table-layout: fixed;
    border-spacing: 0;
    border: 1px solid #000;
    border-width: 1px 0 0 1px;
    font-size: 11px;
    line-height: 16px;
    text-align: center;
}

.small { width: 276px; }
.large { width: 771px; }

th, td {
    height: 33px;
    padding: 0;
    font-weight: 400;
    white-space: nowrap;
    border: 1px solid #000;
    border-width: 0 1px 1px 0;
}

th {
    font-size: 12px;
    background: var(--head-blue);
}

.punch {
    font-size: 10px;
}

td:first-child {
    font-size: 12px;
}

.flagged tbody td:first-child {
    font-size: 11px;
    background: linear-gradient(135deg, #008000 5px, transparent 5px);
}

tbody tr:last-child td {
    height: 31px;
    border-bottom: 0;
}

tfoot td {
    height: 35px;
    padding-bottom: 1px;
    background: var(--total);
    border-top: 3px double #000;
}

.watermark {
    position: absolute;
    top: 544px;
    left: 517px;
    z-index: 2;
    font: 162px/1 "Liberation Sans", Arial, sans-serif;
    color: #969696;
    white-space: nowrap;
    mix-blend-mode: multiply;
    pointer-events: none;
}

/* scroll bars */
.v-scroll {
    display: flex;
    flex-direction: column;
    width: 31px;
    padding: 1px 3px 0 2px;
    background: #f3f3f3;
}

.v-scroll button, .h-scroll button {
    display: flex;
    align-items: center;
    justify-content: center;
    flex: none;
    width: 26px;
    height: 25px;
    background: #fff;
    border: 1px solid #c6c6c6;
}

.v-scroll button:last-child {
    margin-top: auto;
}

.v-scroll i, .h-scroll i {
    border-width: 6px;
}

.v-scroll .up { border-top: 0; border-bottom-color: #777; }
.v-scroll .down { border-bottom: 0; border-top-color: #777; }
.h-scroll .left { border-left: 0; border-right-color: #777; }
.h-scroll .right { border-right: 0; border-left-color: #777; }

.v-thumb {
    height: 120px;
    background: #fff;
    border: 1px solid #ababab;
}

/* sheet tabs */
.sheet-tabs {
    display: flex;
    height: 34px;
    padding: 2px 28px 0 0;
    background: #f5f5f5;
    border-top: 1px solid #ababab;
    font-size: 19px;
    line-height: 25px;
    color: #000;
}

.sheet-nav {
    display: flex;
    align-items: center;
    justify-content: space-between;
    width: 119px;
    height: 28px;
    padding: 0 11px 0 29px;
    border-right: 1px solid #ababab;
}

.more {
    color: #0e6839;
    font-weight: 600;
    font-size: 16px;
}

.sheet-tabs a {
    height: 28px;
    padding: 0 18px;
    margin-left: 2px;
    white-space: nowrap;
}

.sheet-tabs .red { width: 238px; padding: 0; text-align: center; color: #fff; background: #c00000; }
.sheet-tabs .yellow { width: 279px; background: #ff0; }
.sheet-tabs .blue { width: 137px; margin-left: 4px; padding: 0; text-align: center; color: #fff; background: #4472c4; }

.sheet-tabs .cut {
    width: 77px;
    margin: 0 10px 0 5px;
    padding-right: 0;
    overflow: hidden;
}

.sheet-tabs .current {
    width: 200px;
    padding: 0 3px;
    font-size: 20px;
    font-weight: 700;
    text-align: center;
    color: var(--green);
    background: #fff;
    border-bottom: 2px solid var(--green);
}

.current span {
    display: block;
    height: 25px;
    background: linear-gradient(#fff, #e08080);
}

.new-sheet {
    height: 28px;
    margin: 0 22px 0 16px;
}

.sheet-tabs > .grip {
    margin-top: 9px;
}

.h-scroll {
    display: flex;
    flex: 1;
    height: 26px;
    margin: 1px 0 0 17px;
    background: #e9e9e9;
}

.h-scroll .h-thumb {
    flex: 1;
    margin-right: 22px;
    background: #fff;
    border: 1px solid #ababab;
}

/* status bar */
.status {
    display: flex;
    align-items: center;
    gap: 17px;
    height: 33px;
    padding: 0 9px 2px 7px;
    font-size: 15px;
    color: #fff;
    background: var(--green);
}

.views {
    display: flex;
    height: 100%;
    margin-left: auto;
}

.views button {
    display: flex;
    align-items: center;
    justify-content: center;
    width: 45px;
}

.views .on {
    background: #0b6434;
}

.zoom {
    display: flex;
    align-items: center;
    gap: 5px;
    margin-left: -11px;
}

.zoom input {
    appearance: none;
    width: 150px;
    height: 17px;
    background:
        linear-gradient(#fff, #fff) center / 1px 7px no-repeat,
        linear-gradient(#fff, #fff) center / 100% 1px no-repeat;
}

.zoom input::-webkit-slider-thumb {
    appearance: none;
    width: 6px;
    height: 17px;
    background: #fff;
}
```
